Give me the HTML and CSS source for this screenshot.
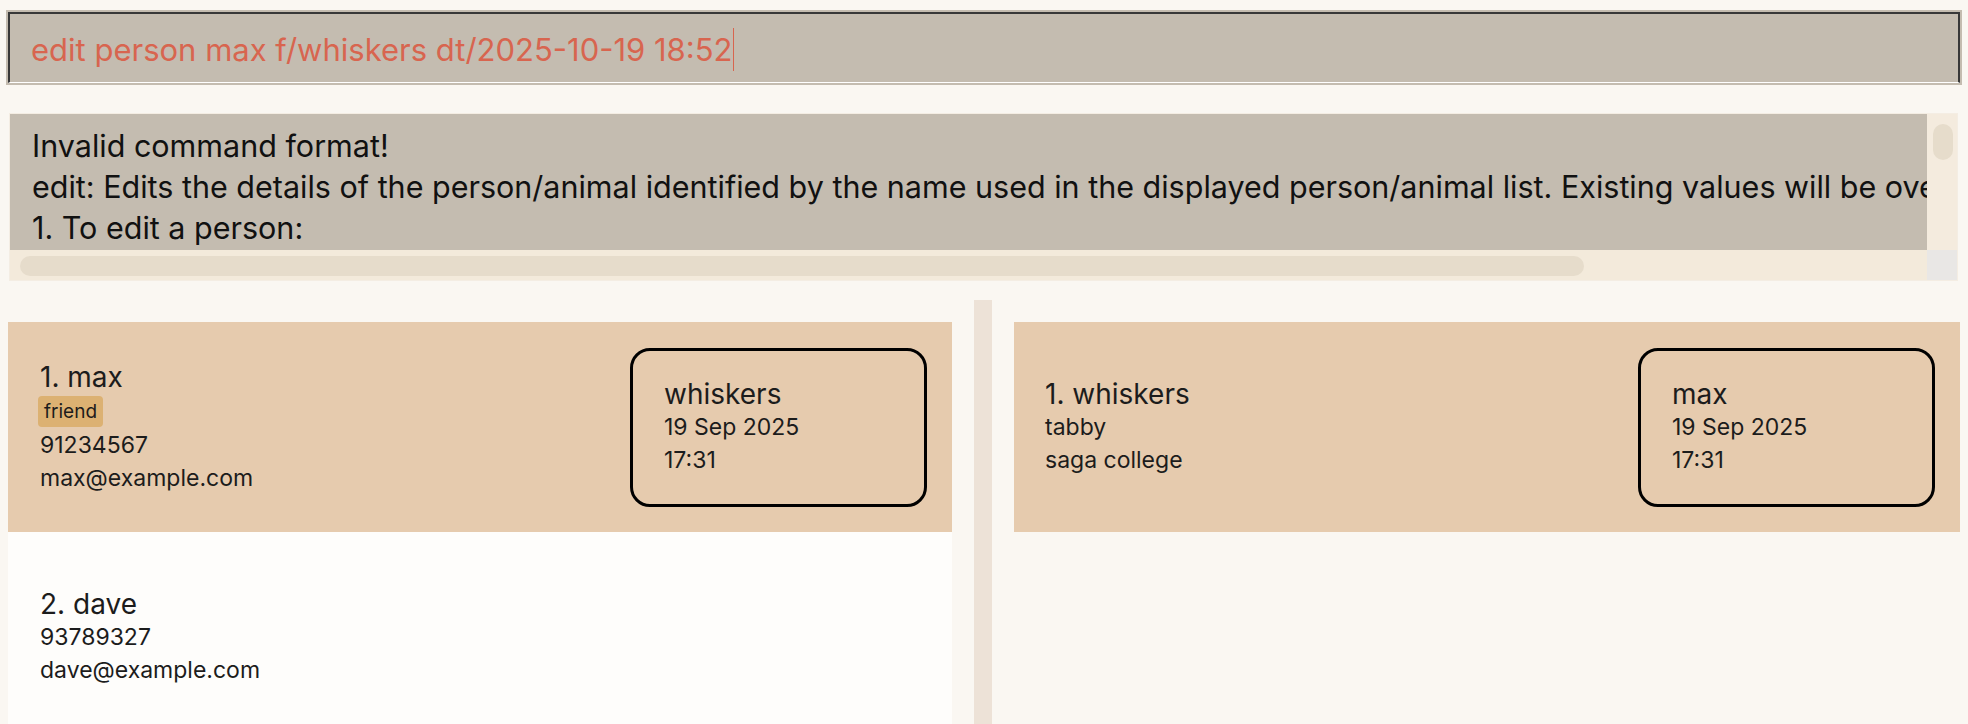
FILE: index.html
```html
<!DOCTYPE html>
<html lang="en">
<head>
<meta charset="utf-8">
<title>Address Book</title>
<link rel="stylesheet" href="styles.css">
</head>
<body>
<div class="app">
  <div class="command-area">
    <div class="command-box">
      <div class="command-field">
        <span class="command-text">edit person max f/whiskers dt/2025-10-19 18:52</span><span class="caret"></span>
      </div>
    </div>
  </div>

  <div class="result-area">
    <div class="result-main">
      <div class="result-viewport">
        <div class="result-text">
          <div class="result-line">Invalid command format!</div>
          <div class="result-line">edit: Edits the details of the person/animal identified by the name used in the displayed person/animal list. Existing values will be overwritten by the input values.</div>
          <div class="result-line">1. To edit a person:</div>
        </div>
      </div>
      <div class="vscroll"><div class="vthumb"></div></div>
    </div>
    <div class="hscroll-row">
      <div class="hscroll"><div class="hthumb"></div></div>
      <div class="scroll-corner"></div>
    </div>
  </div>

  <div class="lists">
    <div class="list list-left">
      <div class="card card-odd">
        <div class="info">
          <div class="title">1. max</div>
          <div class="tags"><span class="tag">friend</span></div>
          <div class="detail">91234567</div>
          <div class="detail">max@example.com</div>
        </div>
        <div class="link-box">
          <div class="title">whiskers</div>
          <div class="detail">19 Sep 2025</div>
          <div class="detail">17:31</div>
        </div>
      </div>
      <div class="card card-even">
        <div class="info">
          <div class="title">2. dave</div>
          <div class="detail">93789327</div>
          <div class="detail">dave@example.com</div>
        </div>
      </div>
    </div>
    <div class="divider"></div>
    <div class="list list-right">
      <div class="card card-odd">
        <div class="info">
          <div class="title">1. whiskers</div>
          <div class="detail">tabby</div>
          <div class="detail">saga college</div>
        </div>
        <div class="link-box">
          <div class="title">max</div>
          <div class="detail">19 Sep 2025</div>
          <div class="detail">17:31</div>
        </div>
      </div>
    </div>
  </div>
</div>
</body>
</html>
```

FILE: styles.css
```css
* { box-sizing: border-box; }

html, body {
  margin: 0;
  padding: 0;
}

body {
  width: 1968px;
  height: 724px;
  overflow: hidden;
  background: #faf7f2;
  font-family: "Inter", "Noto Sans", sans-serif;
  color: #1c1c1c;
}

.app {
  display: flex;
  flex-direction: column;
  height: 724px;
}

/* command box */
.command-area {
  padding: 10px 6px 0 6px;
}

.command-box {
  background: #c4bcb0;
  padding: 2px;
}

.command-field {
  height: 71px;
  border: 2px solid #383838;
  border-bottom: 1px solid #ffffff;
  padding: 2px 0 0 21px;
  display: flex;
  align-items: center;
  font-size: 31px;
  color: #d8654f;
  white-space: nowrap;
}

.caret {
  display: inline-block;
  width: 1px;
  height: 43px;
  background: #d8654f;
  margin-left: 1px;
}

/* result display */
.result-area {
  margin: 28px 10px 0 9px;
  border: 1px solid #f4ede3;
  display: flex;
  flex-direction: column;
}

.result-main {
  display: flex;
  height: 136px;
}

.result-viewport {
  flex: 1;
  background: #c4bcb0;
  overflow: hidden;
}

.result-text {
  padding: 11px 0 0 22px;
  font-size: 30.5px;
  line-height: 41px;
  color: #111111;
  white-space: nowrap;
}

.vscroll {
  width: 30px;
  background: #f4ebde;
  padding: 10px 4px 0 6px;
}

.vthumb {
  height: 36px;
  border-radius: 10px;
  background: #e6dccb;
}

.hscroll-row {
  display: flex;
  height: 30px;
}

.hscroll {
  flex: 1;
  background: #f3eadb;
  padding: 6px 0 0 10px;
}

.hthumb {
  width: 1564px;
  height: 20px;
  border-radius: 10px;
  background: #e6dccb;
}

.scroll-corner {
  width: 30px;
  background: #e9e7e5;
}

/* lists */
.lists {
  margin-top: 19px;
  flex: 1;
  display: flex;
  overflow: hidden;
}

.list {
  display: flex;
  flex-direction: column;
  padding-top: 22px;
}

.list-left {
  width: 974px;
  padding-left: 8px;
  padding-right: 22px;
}

.divider {
  width: 18px;
  background: #ede2d7;
}

.list-right {
  flex: 1;
  padding-left: 22px;
  padding-right: 8px;
}

.card {
  min-height: 210px;
  flex-shrink: 0;
  display: flex;
  align-items: center;
  justify-content: space-between;
  padding: 0 25px 0 32px;
}

.list-right .card {
  padding-left: 31px;
}

.card-odd { background: #e6cbae; }
.card-even { background: #fefdfb; }

.info {
  display: flex;
  flex-direction: column;
}

.title {
  font-size: 28px;
  line-height: 34px;
}

.detail {
  font-size: 23px;
  line-height: 33px;
}

.tags {
  display: flex;
  margin: 2px 0 2px -2px;
}

.tag {
  display: inline-block;
  height: 31px;
  line-height: 31px;
  padding: 0 6px;
  font-size: 19px;
  background: #dcb172;
  border-radius: 4px;
}

.link-box {
  width: 297px;
  height: 159px;
  border: 3px solid #000000;
  border-radius: 20px;
  padding-left: 31px;
  display: flex;
  flex-direction: column;
  justify-content: center;
}
```
